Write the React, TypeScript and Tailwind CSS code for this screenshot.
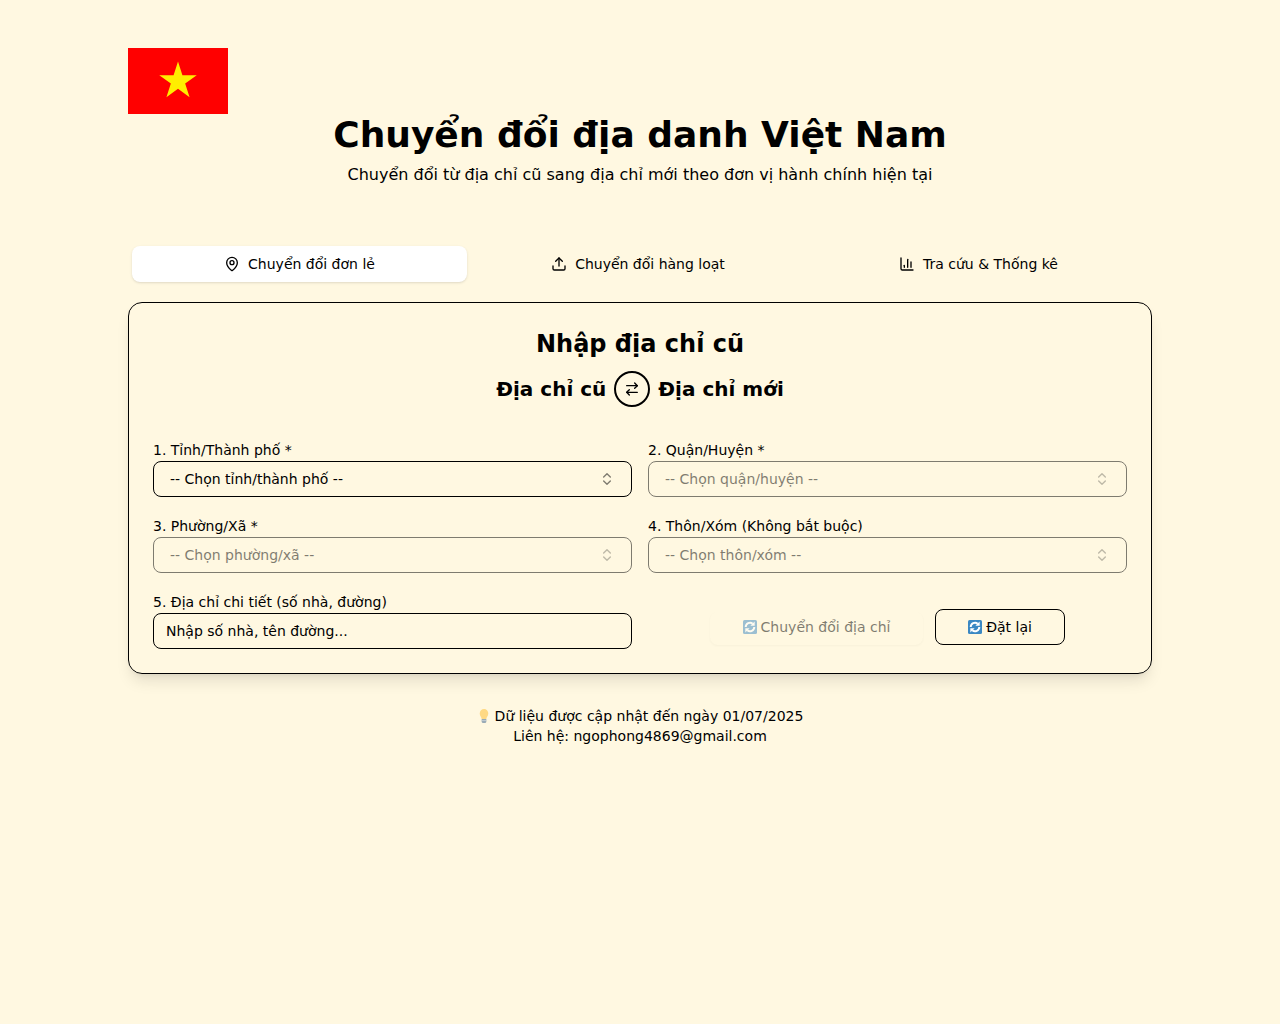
import { ArrowRightLeft, ChartColumn, ChevronsUpDown, MapPin, Upload } from "lucide-react";

const TABS = [
  { label: "Chuyển đổi đơn lẻ", icon: MapPin, active: true },
  { label: "Chuyển đổi hàng loạt", icon: Upload, active: false },
  { label: "Tra cứu & Thống kê", icon: ChartColumn, active: false },
];

function Field({ label, children }: { label: string; children: React.ReactNode }) {
  return (
    <div className="flex flex-col">
      <label className="h-6 text-sm leading-[26px] text-black">{label}</label>
      {children}
    </div>
  );
}

function SelectBox({ text, disabled }: { text: string; disabled?: boolean }) {
  return (
    <button
      type="button"
      disabled={disabled}
      className={`flex h-9 w-full items-center justify-between rounded-lg border border-black pl-4 pr-4 text-sm text-black ${disabled ? "opacity-50" : ""}`}
    >
      <span>{text}</span>
      <ChevronsUpDown size={16} className="opacity-50" />
    </button>
  );
}

function RefreshIcon() {
  return (
    <svg width="14" height="14" viewBox="0 0 36 36" className="shrink-0">
      <rect width="36" height="36" rx="4" fill="#3b88c3" />
      <path d="M7 18a11 11 0 0 1 18-8.500" fill="none" stroke="#fff" strokeWidth="5" />
      <path d="M29 18a11 11 0 0 1-18 8.500" fill="none" stroke="#fff" strokeWidth="5" />
      <polygon points="30,4 30,15 19,15" fill="#fff" />
      <polygon points="6,32 6,21 17,21" fill="#fff" />
    </svg>
  );
}

function BulbIcon() {
  return (
    <svg width="14" height="14" viewBox="0 0 36 36" className="shrink-0">
      <path d="M29 11.500C29 18 24 21 24 26H12c0-5-5-8-5-14.500C7 5.500 12 0 18 0s11 5.500 11 11.500z" fill="#ffd983" />
      <path d="M12 26h12v6a4 4 0 0 1-4 4h-4a4 4 0 0 1-4-4z" fill="#99aab5" />
      <path d="M12 29h12v2H12z" fill="#ccd6dd" />
    </svg>
  );
}

export default function App() {
  return (
    <div className="min-h-[1024px] bg-[#fff8e1] font-['DejaVu_Sans',sans-serif] text-black">
      <div className="mx-auto w-[1024px] pt-12">
        <svg width="100" height="66" viewBox="0 0 100 66" className="block">
          <rect width="100" height="66" fill="#ff0000" />
          <polygon
            points="50,13.6 54.42,27.22 68.74,27.21 57.15,35.62 61.58,49.24 50,40.82 38.42,49.24 42.85,35.62 31.26,27.21 45.58,27.22"
            fill="#ffee00"
          />
        </svg>

        <h1 className="text-center text-[36px] font-bold leading-[42px]">Chuyển đổi địa danh Việt Nam</h1>
        <p className="mt-[7px] text-center text-base leading-6">
          Chuyển đổi từ địa chỉ cũ sang địa chỉ mới theo đơn vị hành chính hiện tại
        </p>

        <div className="mt-[55px] grid grid-cols-[335px_334px_339px] gap-1 p-1">
          {TABS.map((tab) => {
            const Icon = tab.icon;
            return (
              <button
                key={tab.label}
                type="button"
                className={`flex h-9 items-center justify-center gap-2 rounded-lg text-sm ${tab.active ? "bg-white shadow-sm" : ""}`}
              >
                <Icon size={16} />
                {tab.label}
              </button>
            );
          })}
        </div>

        <div className="mt-4 rounded-[14px] border border-black p-6 shadow-lg">
          <h2 className="text-center text-2xl font-bold leading-[34px]">Nhập địa chỉ cũ</h2>
          <div className="mt-[10px] flex items-center justify-center gap-2 text-xl font-bold">
            <span>Địa chỉ cũ</span>
            <span className="flex h-9 w-9 items-center justify-center rounded-full border-2 border-black">
              <ArrowRightLeft size={16} />
            </span>
            <span>Địa chỉ mới</span>
          </div>

          <div className="mt-[30px] grid grid-cols-2 gap-x-4 gap-y-4">
            <Field label="1. Tỉnh/Thành phố *">
              <SelectBox text="-- Chọn tỉnh/thành phố --" />
            </Field>
            <Field label="2. Quận/Huyện *">
              <SelectBox text="-- Chọn quận/huyện --" disabled />
            </Field>
            <Field label="3. Phường/Xã *">
              <SelectBox text="-- Chọn phường/xã --" disabled />
            </Field>
            <Field label="4. Thôn/Xóm (Không bắt buộc)">
              <SelectBox text="-- Chọn thôn/xóm --" disabled />
            </Field>
            <Field label="5. Địa chỉ chi tiết (số nhà, đường)">
              <input
                placeholder="Nhập số nhà, tên đường..."
                className="h-9 w-full rounded-lg border border-black px-3 text-sm placeholder:text-black"
              />
            </Field>
            <div className="flex items-end justify-center gap-3 pb-1">
              <button
                type="button"
                disabled
                className="flex h-[33px] w-[213px] items-center justify-center gap-1 rounded-lg pb-[3px] text-sm text-black opacity-50 shadow-xs"
              >
                <RefreshIcon />
                Chuyển đổi địa chỉ
              </button>
              <button
                type="button"
                className="flex h-9 w-[130px] items-center justify-center gap-1 rounded-lg border border-black text-sm"
              >
                <RefreshIcon />
                Đặt lại
              </button>
            </div>
          </div>
        </div>

        <div className="mt-8 text-center text-sm leading-5">
          <p className="flex items-center justify-center gap-1">
            <BulbIcon />
            Dữ liệu được cập nhật đến ngày 01/07/2025
          </p>
          <p>Liên hệ: ngophong4869@gmail.com</p>
        </div>
      </div>
    </div>
  );
}
